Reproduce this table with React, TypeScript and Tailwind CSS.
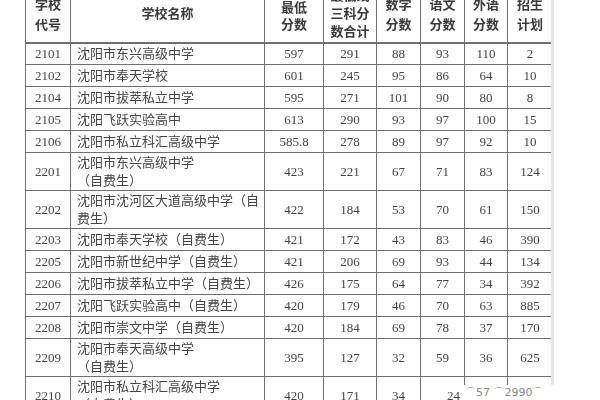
import React from "react";

type Row = {
  code: string;
  name: React.ReactNode;
  min: string;
  three: string;
  math: string;
  chinese: string;
  foreign: string;
  plan: string;
  tall?: boolean;
};

const rows: Row[] = [
  { code: "2101", name: "沈阳市东兴高级中学", min: "597", three: "291", math: "88", chinese: "93", foreign: "110", plan: "2" },
  { code: "2102", name: "沈阳市奉天学校", min: "601", three: "245", math: "95", chinese: "86", foreign: "64", plan: "10" },
  { code: "2104", name: "沈阳市拔萃私立中学", min: "595", three: "271", math: "101", chinese: "90", foreign: "80", plan: "8" },
  { code: "2105", name: "沈阳飞跃实验高中", min: "613", three: "290", math: "93", chinese: "97", foreign: "100", plan: "15" },
  { code: "2106", name: "沈阳市私立科汇高级中学", min: "585.8", three: "278", math: "89", chinese: "97", foreign: "92", plan: "10" },
  { code: "2201", name: (<>沈阳市东兴高级中学<br />（自费生）</>), min: "423", three: "221", math: "67", chinese: "71", foreign: "83", plan: "124", tall: true },
  { code: "2202", name: (<>沈阳市沈河区大道高级中学（自<br />费生）</>), min: "422", three: "184", math: "53", chinese: "70", foreign: "61", plan: "150", tall: true },
  { code: "2203", name: "沈阳市奉天学校（自费生）", min: "421", three: "172", math: "43", chinese: "83", foreign: "46", plan: "390" },
  { code: "2205", name: "沈阳市新世纪中学（自费生）", min: "421", three: "206", math: "69", chinese: "93", foreign: "44", plan: "134" },
  { code: "2206", name: "沈阳市拔萃私立中学（自费生）", min: "426", three: "175", math: "64", chinese: "77", foreign: "34", plan: "392" },
  { code: "2207", name: "沈阳飞跃实验高中（自费生）", min: "420", three: "179", math: "46", chinese: "70", foreign: "63", plan: "885" },
  { code: "2208", name: "沈阳市崇文中学（自费生）", min: "420", three: "184", math: "69", chinese: "78", foreign: "37", plan: "170" },
  { code: "2209", name: (<>沈阳市奉天高级中学<br />（自费生）</>), min: "395", three: "127", math: "32", chinese: "59", foreign: "36", plan: "625", tall: true },
];

const cell = "border border-[#6f6f6f] text-center align-middle p-0";

export default function App() {
  return (
    <div className="w-[600px] h-[400px] overflow-hidden bg-white relative font-['Liberation_Serif','Noto_Sans_CJK_SC',serif] text-[13px] text-[#454545]">
      <div className="pl-[25px] mt-[-14px] blur-[0.35px]">
        <table className="table-fixed border-collapse w-[527px]">
          <colgroup>
            <col className="w-[45px]" />
            <col className="w-[194px]" />
            <col className="w-[59px]" />
            <col className="w-[53px]" />
            <col className="w-[44px]" />
            <col className="w-[44px]" />
            <col className="w-[43px]" />
            <col className="w-[45px]" />
          </colgroup>
          <thead>
            <tr className="h-[56px] font-bold text-[#3a3a3a] leading-[20px]">
              <th className={`${cell} border-b-2`}><div className="pt-[2px]">学校<br />代号</div></th>
              <th className={`${cell} border-b-2`}>学校名称</th>
              <th className={`${cell} border-b-2`}><div className="pt-[4px] leading-[17px]">最低<br />分数</div></th>
              <th className={`${cell} border-b-2`}><div className="leading-[18px]">最低线<br />三科分<br />数合计</div></th>
              <th className={`${cell} border-b-2`}><div className="pt-[2px]">数学<br />分数</div></th>
              <th className={`${cell} border-b-2`}><div className="pt-[2px]">语文<br />分数</div></th>
              <th className={`${cell} border-b-2`}><div className="pt-[2px]">外语<br />分数</div></th>
              <th className={`${cell} border-b-2`}><div className="pt-[2px]">招生<br />计划</div></th>
            </tr>
          </thead>
          <tbody>
            {rows.map((r) => (
              <tr key={r.code} className={r.tall ? "h-[38px]" : "h-[22px]"}>
                <td className={cell}>{r.code}</td>
                <td className={`${cell} text-left pl-[6px] leading-[18px]`}>{r.name}</td>
                <td className={cell}>{r.min}</td>
                <td className={cell}>{r.three}</td>
                <td className={cell}>{r.math}</td>
                <td className={cell}>{r.chinese}</td>
                <td className={cell}>{r.foreign}</td>
                <td className={cell}>{r.plan}</td>
              </tr>
            ))}
            <tr className="h-[38px]">
              <td className={cell}>2210</td>
              <td className={`${cell} text-left pl-[6px] leading-[18px]`}>沈阳市私立科汇高级中学<br />（自费生）</td>
              <td className={cell}>420</td>
              <td className={cell}>171</td>
              <td className={cell}>34</td>
              <td className={`${cell} text-right pr-[4px]`}>24</td>
              <td className={cell}></td>
              <td className={cell}></td>
            </tr>
          </tbody>
        </table>
      </div>
      <div className="absolute left-[551px] top-0 w-[3px] h-[400px] bg-[#e4e4e4]" />
      <div className="absolute left-[463px] top-[385px] w-[92px] h-[15px] bg-white text-[11px] leading-[15px] text-[#888] font-['DejaVu_Sans',sans-serif] whitespace-nowrap pl-[2px]">
        ⌒57 ⌒2990⌒
      </div>
    </div>
  );
}
